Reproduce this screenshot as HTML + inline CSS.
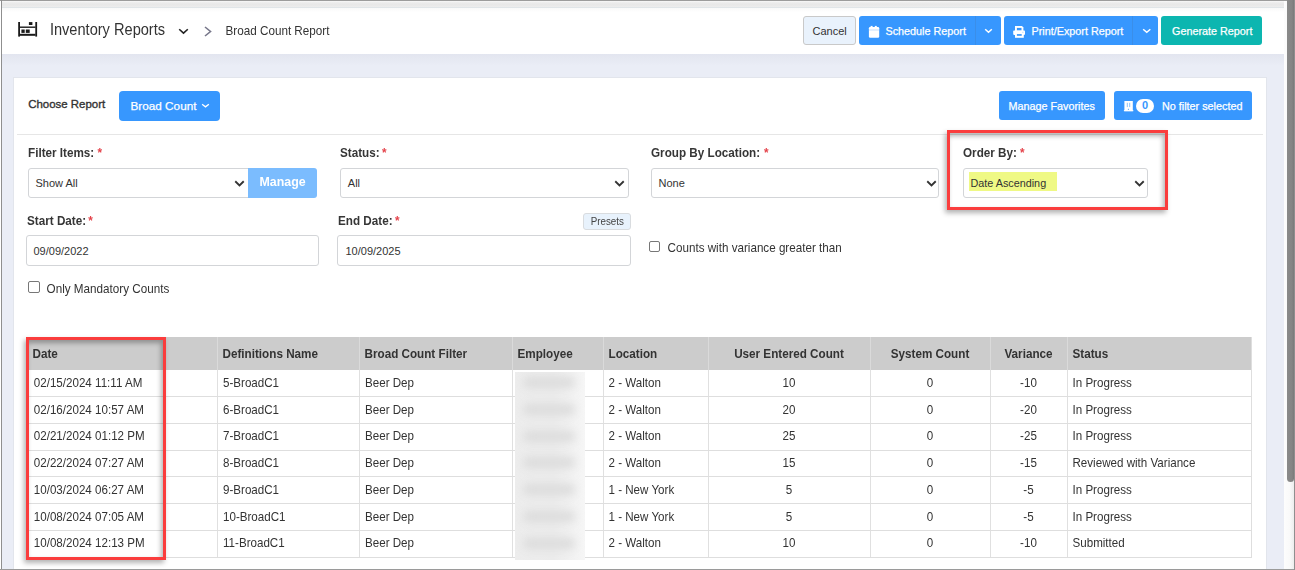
<!DOCTYPE html>
<html><head><meta charset="utf-8">
<style>
*{box-sizing:border-box;margin:0;padding:0}
html,body{width:1295px;height:570px;overflow:hidden;background:#fff;font-family:"Liberation Sans",sans-serif;color:#333}
.a{position:absolute}
.t{position:absolute;white-space:nowrap;line-height:1}
</style></head>
<body>

<div class="a" style="left:0px;top:0px;width:1295px;height:1px;background:#9c9c9c;"></div>
<div class="a" style="left:1px;top:0px;width:1px;height:570px;background:#8f8f8f;"></div>
<div class="a" style="left:0px;top:569px;width:1295px;height:1px;background:#9a9a9a;"></div>
<div class="a" style="left:1294px;top:0px;width:1px;height:570px;background:#8f8f8f;"></div>
<div class="a" style="left:2px;top:1px;width:1282px;height:6px;background:linear-gradient(#f8f8f8,#ebebeb 30%,#e8e8e8 60%,#ececec);"></div>
<div class="a" style="left:2px;top:7px;width:1282px;height:1px;background:#e0e5e8;"></div>
<div class="a" style="left:2px;top:8px;width:1282px;height:46px;background:linear-gradient(#f9f9f9,#fff 4px);"></div>
<div class="a" style="left:2px;top:54px;width:1282px;height:515px;background:#eaedf6;"></div>
<div class="a" style="left:2px;top:54px;width:1282px;height:12px;background:linear-gradient(rgba(60,60,90,0.045),rgba(60,60,90,0));"></div>
<div class="a" style="left:1284px;top:1px;width:10px;height:568px;background:linear-gradient(to right,#fdfdfd,#f9f9f9 60%,#ededed);"></div>
<div class="a" style="left:1287px;top:0px;width:7px;height:482px;background:linear-gradient(to right,#8a8a8a,#858585 70%,#7a7a7a);border-radius:0 0 4px 4px"></div>
<div class="a" style="left:13px;top:77px;width:1254px;height:492px;background:#fff;border:1px solid #e2e5ec;border-bottom:none"></div>
<svg class="a" style="left:17px;top:21px" width="21" height="17" fill="#1a1a1a">
<rect x="1.2" y="1" width="1.8" height="14.6"/><rect x="18.3" y="1" width="1.8" height="14.6"/>
<rect x="2.5" y="5.5" width="16" height="1.4"/><rect x="2.5" y="12.8" width="16" height="2"/>
<rect x="11.9" y="1.1" width="3.5" height="2.9"/>
<rect x="4.4" y="8.5" width="3.3" height="3.4"/><rect x="8.8" y="8.5" width="3.9" height="3.4"/>
</svg>
<div class="t" style="left:49.90px;top:22.64px;font-size:14.6px;font-weight:normal;color:#333;transform:scaleY(1.08);transform-origin:0 12.36px;">Inventory Reports</div>
<svg class="a" style="left:177px;top:26.6px" width="13" height="9.0"><polyline points="2.8,2.8 6.5,6.2 10.2,2.8" fill="none" stroke="#222" stroke-width="1.6" stroke-linecap="square"/></svg>
<svg class="a" style="left:202px;top:25px" width="12" height="13"><polyline points="3,2 8.5,6.5 3,11" fill="none" stroke="#77778a" stroke-width="1.6"/></svg>
<div class="t" style="left:225.50px;top:25.10px;font-size:11.7px;font-weight:normal;color:#333;transform:scaleY(1.1);transform-origin:0 9.90px;">Broad Count Report</div>
<div class="a" style="left:803px;top:16px;width:53px;height:29px;background:#e9f2fc;border:1px solid #c9c9c9;border-radius:3px"></div>
<div class="t" style="left:812.50px;top:25.99px;font-size:11px;font-weight:normal;color:#333;">Cancel</div>
<div class="a" style="left:859px;top:16px;width:142px;height:29px;background:#3797fe;border-radius:3px"></div>
<div class="a" style="left:975px;top:16px;width:1px;height:29px;background:#3a8ee9;"></div>
<svg class="a" style="left:868px;top:25px" width="12" height="14">
<rect x="0.9" y="2" width="10.3" height="10.7" rx="1.2" fill="#fff"/><rect x="0.9" y="4.7" width="10.3" height="0.6" fill="#9fcbfb"/><rect x="2.6" y="0.9" width="2" height="2.6" fill="#fff"/><rect x="6.8" y="0.9" width="2" height="2.6" fill="#fff"/>
</svg>
<div class="t" style="left:885.50px;top:26.16px;font-size:10.8px;font-weight:normal;color:#fff;-webkit-text-stroke:0.25px #fff">Schedule Report</div>
<svg class="a" style="left:983px;top:27px" width="11" height="8"><polyline points="2.75,2.75 5.5,5.25 8.25,2.75" fill="none" stroke="#fff" stroke-width="1.5" stroke-linecap="square"/></svg>
<div class="a" style="left:1004px;top:16px;width:154px;height:29px;background:#3797fe;border-radius:3px"></div>
<div class="a" style="left:1132px;top:16px;width:1px;height:29px;background:#3a8ee9;"></div>
<svg class="a" style="left:1012px;top:25px" width="15" height="14">
<path d="M3,1H10L11.4,2.4V6H3Z" fill="#fff"/><rect x="4.9" y="2.9" width="4.6" height="2.7" fill="#3797fe"/>
<rect x="1.2" y="5.6" width="11.8" height="4.3" rx="0.8" fill="#fff"/>
<rect x="3" y="8" width="8.8" height="4.8" fill="#fff"/><rect x="4.9" y="9.1" width="4.8" height="1.7" fill="#3797fe"/>
<rect x="10.4" y="6.8" width="1" height="0.9" fill="#9fcbfb"/>
</svg>
<div class="t" style="left:1031.50px;top:26.16px;font-size:10.8px;font-weight:normal;color:#fff;-webkit-text-stroke:0.25px #fff">Print/Export Report</div>
<svg class="a" style="left:1140.5px;top:27px" width="11.5" height="8"><polyline points="2.75,2.75 5.75,5.25 8.75,2.75" fill="none" stroke="#fff" stroke-width="1.5" stroke-linecap="square"/></svg>
<div class="a" style="left:1161px;top:16px;width:101px;height:29px;background:#0cb6b0;border-radius:3px"></div>
<div class="t" style="left:1172.00px;top:26.16px;font-size:10.8px;font-weight:normal;color:#fff;-webkit-text-stroke:0.25px #fff">Generate Report</div>
<div class="t" style="left:28.20px;top:99.21px;font-size:11.45px;font-weight:normal;color:#333;-webkit-text-stroke:0.35px #333">Choose Report</div>
<div class="a" style="left:119px;top:91px;width:101px;height:30px;background:#3797fe;border-radius:4px"></div>
<div class="t" style="left:130.50px;top:100.05px;font-size:11.75px;font-weight:normal;color:#fff;-webkit-text-stroke:0.25px #fff">Broad Count</div>
<svg class="a" style="left:199.5px;top:102px" width="11.0" height="7.5"><polyline points="2.7,2.7 5.5,4.8 8.3,2.7" fill="none" stroke="#fff" stroke-width="1.4" stroke-linecap="square"/></svg>
<div class="a" style="left:999px;top:91px;width:106px;height:29px;background:#3797fe;border-radius:3px"></div>
<div class="t" style="left:1008.50px;top:101.16px;font-size:10.8px;font-weight:normal;color:#fff;-webkit-text-stroke:0.25px #fff">Manage Favorites</div>
<div class="a" style="left:1114px;top:91px;width:138px;height:29px;background:#3797fe;border-radius:3px"></div>
<div class="t" style="left:1162.00px;top:101.16px;font-size:10.8px;font-weight:normal;color:#fff;-webkit-text-stroke:0.25px #fff">No filter selected</div>
<div class="a" style="left:1136px;top:98.7px;width:18px;height:14.299999999999997px;background:#fff;border-radius:7px"></div>
<div class="t" style="left:1142.00px;top:99.69px;font-size:11px;font-weight:bold;color:#3797fe;">0</div>
<svg class="a" style="left:1123px;top:100px" width="11" height="13">
<rect x="1.4" y="1" width="8.4" height="10.2" fill="#fff"/><rect x="0.9" y="10.1" width="9.4" height="1.1" fill="#fff"/>
<rect x="3.8" y="2.8" width="1" height="4.3" fill="#8cc3fb"/><rect x="6.2" y="2.8" width="1" height="4.3" fill="#8cc3fb"/>
<rect x="4.9" y="8.8" width="1" height="1" fill="#3797fe"/>
</svg>
<div class="a" style="left:17px;top:134px;width:1246px;height:1px;background:#e6e6e6;"></div>
<div class="t" style="left:28.00px;top:147.10px;font-size:11.7px;font-weight:bold;color:#363636;transform:scaleY(1.09);transform-origin:0 9.90px;">Filter Items:</div>
<div class="t" style="left:97.50px;top:147.10px;font-size:11.7px;font-weight:bold;color:#e4434b;transform:scaleY(1.09);transform-origin:0 9.90px;">*</div>
<div class="a" style="left:28px;top:168px;width:221px;height:30px;background:#fff;border:1px solid #d3d5d8;border-radius:3px;border-radius:3px 0 0 3px"></div>
<div class="t" style="left:35.50px;top:178.19px;font-size:11px;font-weight:normal;color:#333;">Show All</div>
<svg class="a" style="left:233px;top:178.6px" width="13" height="9.300000000000011"><polyline points="2.95,2.95 6.5,6.350000000000011 10.05,2.95" fill="none" stroke="#333" stroke-width="1.9" stroke-linecap="square"/></svg>
<div class="a" style="left:248px;top:168px;width:69px;height:30px;background:#7bbcfe;border-radius:0 3px 3px 0"></div>
<div class="t" style="left:259.50px;top:175.50px;font-size:12.4px;font-weight:bold;color:#fff;transform:scaleY(1.08);transform-origin:0 10.50px;">Manage</div>
<div class="t" style="left:340.00px;top:147.10px;font-size:11.7px;font-weight:bold;color:#363636;transform:scaleY(1.09);transform-origin:0 9.90px;">Status:</div>
<div class="t" style="left:382.00px;top:147.10px;font-size:11.7px;font-weight:bold;color:#e4434b;transform:scaleY(1.09);transform-origin:0 9.90px;">*</div>
<div class="a" style="left:340px;top:168px;width:289px;height:30px;background:#fff;border:1px solid #d3d5d8;border-radius:3px;"></div>
<div class="t" style="left:347.80px;top:178.19px;font-size:11px;font-weight:normal;color:#333;">All</div>
<svg class="a" style="left:612.8px;top:178.6px" width="13.0" height="9.300000000000011"><polyline points="2.95,2.95 6.5,6.350000000000011 10.05,2.95" fill="none" stroke="#333" stroke-width="1.9" stroke-linecap="square"/></svg>
<div class="t" style="left:651.00px;top:147.10px;font-size:11.7px;font-weight:bold;color:#363636;transform:scaleY(1.09);transform-origin:0 9.90px;">Group By Location:</div>
<div class="t" style="left:764.00px;top:147.10px;font-size:11.7px;font-weight:bold;color:#e4434b;transform:scaleY(1.09);transform-origin:0 9.90px;">*</div>
<div class="a" style="left:651px;top:168px;width:288px;height:30px;background:#fff;border:1px solid #d3d5d8;border-radius:3px;"></div>
<div class="t" style="left:658.50px;top:178.19px;font-size:11px;font-weight:normal;color:#333;">None</div>
<svg class="a" style="left:924.5px;top:178.6px" width="13.0" height="9.300000000000011"><polyline points="2.95,2.95 6.5,6.350000000000011 10.05,2.95" fill="none" stroke="#333" stroke-width="1.9" stroke-linecap="square"/></svg>
<div class="t" style="left:963.00px;top:147.10px;font-size:11.7px;font-weight:bold;color:#363636;transform:scaleY(1.09);transform-origin:0 9.90px;">Order By:</div>
<div class="t" style="left:1020.00px;top:147.10px;font-size:11.7px;font-weight:bold;color:#e4434b;transform:scaleY(1.09);transform-origin:0 9.90px;">*</div>
<div class="a" style="left:963px;top:168px;width:185px;height:30px;background:#fff;border:1px solid #d3d5d8;border-radius:3px;"></div>
<svg class="a" style="left:1132.5px;top:178.6px" width="13.0" height="9.300000000000011"><polyline points="2.95,2.95 6.5,6.350000000000011 10.05,2.95" fill="none" stroke="#333" stroke-width="1.9" stroke-linecap="square"/></svg>
<div class="a" style="left:969px;top:172px;width:88px;height:19px;background:#eff985;"></div>
<div class="t" style="left:970.50px;top:178.36px;font-size:10.8px;font-weight:normal;color:#333;">Date Ascending</div>
<div class="t" style="left:27.00px;top:215.10px;font-size:11.7px;font-weight:bold;color:#363636;transform:scaleY(1.09);transform-origin:0 9.90px;">Start Date:</div>
<div class="t" style="left:88.30px;top:215.10px;font-size:11.7px;font-weight:bold;color:#e4434b;transform:scaleY(1.09);transform-origin:0 9.90px;">*</div>
<div class="a" style="left:26px;top:235px;width:293px;height:31px;background:#fff;border:1px solid #d3d5d8;border-radius:3px"></div>
<div class="t" style="left:33.50px;top:245.69px;font-size:11px;font-weight:normal;color:#333;">09/09/2022</div>
<div class="t" style="left:338.00px;top:215.10px;font-size:11.7px;font-weight:bold;color:#363636;transform:scaleY(1.09);transform-origin:0 9.90px;">End Date:</div>
<div class="t" style="left:395.00px;top:215.10px;font-size:11.7px;font-weight:bold;color:#e4434b;transform:scaleY(1.09);transform-origin:0 9.90px;">*</div>
<div class="a" style="left:583px;top:213px;width:48px;height:16.5px;background:#e8f2fc;border:1px solid #d9dcdf;border-radius:3px"></div>
<div class="t" style="left:590.70px;top:216.70px;font-size:9.8px;font-weight:normal;color:#444;transform:scaleY(1.1);transform-origin:0 8.30px;">Presets</div>
<div class="a" style="left:337px;top:235px;width:294px;height:31px;background:#fff;border:1px solid #d3d5d8;border-radius:3px"></div>
<div class="t" style="left:345.50px;top:245.69px;font-size:11px;font-weight:normal;color:#333;">10/09/2025</div>
<div class="a" style="left:28px;top:281px;width:12px;height:12px;background:#fff;border:1px solid #777;border-radius:2px"></div>
<div class="t" style="left:46.60px;top:282.60px;font-size:11.7px;font-weight:normal;color:#333;transform:scaleY(1.08);transform-origin:0 9.90px;">Only Mandatory Counts</div>
<div class="a" style="left:649px;top:241px;width:11px;height:11px;background:#fff;border:1px solid #777;border-radius:2px"></div>
<div class="t" style="left:667.60px;top:242.44px;font-size:11.65px;font-weight:normal;color:#333;transform:scaleY(1.08);transform-origin:0 9.86px;">Counts with variance greater than</div>
<div class="a" style="left:27px;top:337px;width:1225px;height:33px;background:#cccccc;"></div>
<div class="a" style="left:27px;top:337px;width:1px;height:220px;background:#dedede;"></div>
<div class="a" style="left:217px;top:337px;width:1px;height:33px;background:#dadada;"></div>
<div class="a" style="left:217px;top:370px;width:1px;height:187px;background:#e0e0e0;"></div>
<div class="a" style="left:359px;top:337px;width:1px;height:33px;background:#dadada;"></div>
<div class="a" style="left:359px;top:370px;width:1px;height:187px;background:#e0e0e0;"></div>
<div class="a" style="left:512px;top:337px;width:1px;height:33px;background:#dadada;"></div>
<div class="a" style="left:512px;top:370px;width:1px;height:187px;background:#e0e0e0;"></div>
<div class="a" style="left:603px;top:337px;width:1px;height:33px;background:#dadada;"></div>
<div class="a" style="left:603px;top:370px;width:1px;height:187px;background:#e0e0e0;"></div>
<div class="a" style="left:708px;top:337px;width:1px;height:33px;background:#dadada;"></div>
<div class="a" style="left:708px;top:370px;width:1px;height:187px;background:#e0e0e0;"></div>
<div class="a" style="left:870px;top:337px;width:1px;height:33px;background:#dadada;"></div>
<div class="a" style="left:870px;top:370px;width:1px;height:187px;background:#e0e0e0;"></div>
<div class="a" style="left:990px;top:337px;width:1px;height:33px;background:#dadada;"></div>
<div class="a" style="left:990px;top:370px;width:1px;height:187px;background:#e0e0e0;"></div>
<div class="a" style="left:1067px;top:337px;width:1px;height:33px;background:#dadada;"></div>
<div class="a" style="left:1067px;top:370px;width:1px;height:187px;background:#e0e0e0;"></div>
<div class="a" style="left:1251px;top:337px;width:1px;height:220px;background:#dedede;"></div>
<div class="a" style="left:27px;top:396px;width:1225px;height:1px;background:#dedede;"></div>
<div class="a" style="left:27px;top:423px;width:1225px;height:1px;background:#dedede;"></div>
<div class="a" style="left:27px;top:450px;width:1225px;height:1px;background:#dedede;"></div>
<div class="a" style="left:27px;top:476px;width:1225px;height:1px;background:#dedede;"></div>
<div class="a" style="left:27px;top:503px;width:1225px;height:1px;background:#dedede;"></div>
<div class="a" style="left:27px;top:530px;width:1225px;height:1px;background:#dedede;"></div>
<div class="a" style="left:27px;top:557px;width:1225px;height:1px;background:#dedede;"></div>
<div class="t" style="left:32.50px;top:347.60px;font-size:11.7px;font-weight:bold;color:#333;transform:scaleY(1.06);transform-origin:0 9.90px;">Date</div>
<div class="t" style="left:222.50px;top:347.60px;font-size:11.7px;font-weight:bold;color:#333;transform:scaleY(1.06);transform-origin:0 9.90px;">Definitions Name</div>
<div class="t" style="left:364.50px;top:347.60px;font-size:11.7px;font-weight:bold;color:#333;transform:scaleY(1.06);transform-origin:0 9.90px;">Broad Count Filter</div>
<div class="t" style="left:517.50px;top:347.60px;font-size:11.7px;font-weight:bold;color:#333;transform:scaleY(1.06);transform-origin:0 9.90px;">Employee</div>
<div class="t" style="left:608.50px;top:347.60px;font-size:11.7px;font-weight:bold;color:#333;transform:scaleY(1.06);transform-origin:0 9.90px;">Location</div>
<div class="t" style="left:708px;width:162px;text-align:center;top:347.60px;font-size:11.7px;font-weight:bold;color:#333;transform:scaleY(1.06);transform-origin:0 9.9px">User Entered Count</div>
<div class="t" style="left:870px;width:120px;text-align:center;top:347.60px;font-size:11.7px;font-weight:bold;color:#333;transform:scaleY(1.06);transform-origin:0 9.9px">System Count</div>
<div class="t" style="left:990px;width:77px;text-align:center;top:347.60px;font-size:11.7px;font-weight:bold;color:#333;transform:scaleY(1.06);transform-origin:0 9.9px">Variance</div>
<div class="t" style="left:1072.50px;top:347.60px;font-size:11.7px;font-weight:bold;color:#333;transform:scaleY(1.06);transform-origin:0 9.90px;">Status</div>
<div class="t" style="left:33.80px;top:376.98px;font-size:11.6px;font-weight:normal;color:#333;transform:scaleY(1.1);transform-origin:0 9.82px;">02/15/2024 11:11 AM</div>
<div class="t" style="left:223.00px;top:376.98px;font-size:11.6px;font-weight:normal;color:#333;transform:scaleY(1.1);transform-origin:0 9.82px;">5-BroadC1</div>
<div class="t" style="left:365.00px;top:376.98px;font-size:11.6px;font-weight:normal;color:#333;transform:scaleY(1.1);transform-origin:0 9.82px;">Beer Dep</div>
<div class="t" style="left:608.50px;top:376.98px;font-size:11.6px;font-weight:normal;color:#333;transform:scaleY(1.1);transform-origin:0 9.82px;">2 - Walton</div>
<div class="t" style="left:708px;width:162px;text-align:center;top:376.98px;font-size:11.6px;color:#333;transform:scaleY(1.1);transform-origin:0 9.82px">10</div>
<div class="t" style="left:870px;width:120px;text-align:center;top:376.98px;font-size:11.6px;color:#333;transform:scaleY(1.1);transform-origin:0 9.82px">0</div>
<div class="t" style="left:990px;width:77px;text-align:center;top:376.98px;font-size:11.6px;color:#333;transform:scaleY(1.1);transform-origin:0 9.82px">-10</div>
<div class="t" style="left:1072.50px;top:376.98px;font-size:11.6px;font-weight:normal;color:#333;transform:scaleY(1.1);transform-origin:0 9.82px;">In Progress</div>
<div class="t" style="left:33.80px;top:403.68px;font-size:11.6px;font-weight:normal;color:#333;transform:scaleY(1.1);transform-origin:0 9.82px;">02/16/2024 10:57 AM</div>
<div class="t" style="left:223.00px;top:403.68px;font-size:11.6px;font-weight:normal;color:#333;transform:scaleY(1.1);transform-origin:0 9.82px;">6-BroadC1</div>
<div class="t" style="left:365.00px;top:403.68px;font-size:11.6px;font-weight:normal;color:#333;transform:scaleY(1.1);transform-origin:0 9.82px;">Beer Dep</div>
<div class="t" style="left:608.50px;top:403.68px;font-size:11.6px;font-weight:normal;color:#333;transform:scaleY(1.1);transform-origin:0 9.82px;">2 - Walton</div>
<div class="t" style="left:708px;width:162px;text-align:center;top:403.68px;font-size:11.6px;color:#333;transform:scaleY(1.1);transform-origin:0 9.82px">20</div>
<div class="t" style="left:870px;width:120px;text-align:center;top:403.68px;font-size:11.6px;color:#333;transform:scaleY(1.1);transform-origin:0 9.82px">0</div>
<div class="t" style="left:990px;width:77px;text-align:center;top:403.68px;font-size:11.6px;color:#333;transform:scaleY(1.1);transform-origin:0 9.82px">-20</div>
<div class="t" style="left:1072.50px;top:403.68px;font-size:11.6px;font-weight:normal;color:#333;transform:scaleY(1.1);transform-origin:0 9.82px;">In Progress</div>
<div class="t" style="left:33.80px;top:429.98px;font-size:11.6px;font-weight:normal;color:#333;transform:scaleY(1.1);transform-origin:0 9.82px;">02/21/2024 01:12 PM</div>
<div class="t" style="left:223.00px;top:429.98px;font-size:11.6px;font-weight:normal;color:#333;transform:scaleY(1.1);transform-origin:0 9.82px;">7-BroadC1</div>
<div class="t" style="left:365.00px;top:429.98px;font-size:11.6px;font-weight:normal;color:#333;transform:scaleY(1.1);transform-origin:0 9.82px;">Beer Dep</div>
<div class="t" style="left:608.50px;top:429.98px;font-size:11.6px;font-weight:normal;color:#333;transform:scaleY(1.1);transform-origin:0 9.82px;">2 - Walton</div>
<div class="t" style="left:708px;width:162px;text-align:center;top:429.98px;font-size:11.6px;color:#333;transform:scaleY(1.1);transform-origin:0 9.82px">25</div>
<div class="t" style="left:870px;width:120px;text-align:center;top:429.98px;font-size:11.6px;color:#333;transform:scaleY(1.1);transform-origin:0 9.82px">0</div>
<div class="t" style="left:990px;width:77px;text-align:center;top:429.98px;font-size:11.6px;color:#333;transform:scaleY(1.1);transform-origin:0 9.82px">-25</div>
<div class="t" style="left:1072.50px;top:429.98px;font-size:11.6px;font-weight:normal;color:#333;transform:scaleY(1.1);transform-origin:0 9.82px;">In Progress</div>
<div class="t" style="left:33.80px;top:456.98px;font-size:11.6px;font-weight:normal;color:#333;transform:scaleY(1.1);transform-origin:0 9.82px;">02/22/2024 07:27 AM</div>
<div class="t" style="left:223.00px;top:456.98px;font-size:11.6px;font-weight:normal;color:#333;transform:scaleY(1.1);transform-origin:0 9.82px;">8-BroadC1</div>
<div class="t" style="left:365.00px;top:456.98px;font-size:11.6px;font-weight:normal;color:#333;transform:scaleY(1.1);transform-origin:0 9.82px;">Beer Dep</div>
<div class="t" style="left:608.50px;top:456.98px;font-size:11.6px;font-weight:normal;color:#333;transform:scaleY(1.1);transform-origin:0 9.82px;">2 - Walton</div>
<div class="t" style="left:708px;width:162px;text-align:center;top:456.98px;font-size:11.6px;color:#333;transform:scaleY(1.1);transform-origin:0 9.82px">15</div>
<div class="t" style="left:870px;width:120px;text-align:center;top:456.98px;font-size:11.6px;color:#333;transform:scaleY(1.1);transform-origin:0 9.82px">0</div>
<div class="t" style="left:990px;width:77px;text-align:center;top:456.98px;font-size:11.6px;color:#333;transform:scaleY(1.1);transform-origin:0 9.82px">-15</div>
<div class="t" style="left:1072.50px;top:456.98px;font-size:11.6px;font-weight:normal;color:#333;transform:scaleY(1.1);transform-origin:0 9.82px;">Reviewed with Variance</div>
<div class="t" style="left:33.80px;top:484.18px;font-size:11.6px;font-weight:normal;color:#333;transform:scaleY(1.1);transform-origin:0 9.82px;">10/03/2024 06:27 AM</div>
<div class="t" style="left:223.00px;top:484.18px;font-size:11.6px;font-weight:normal;color:#333;transform:scaleY(1.1);transform-origin:0 9.82px;">9-BroadC1</div>
<div class="t" style="left:365.00px;top:484.18px;font-size:11.6px;font-weight:normal;color:#333;transform:scaleY(1.1);transform-origin:0 9.82px;">Beer Dep</div>
<div class="t" style="left:608.50px;top:484.18px;font-size:11.6px;font-weight:normal;color:#333;transform:scaleY(1.1);transform-origin:0 9.82px;">1 - New York</div>
<div class="t" style="left:708px;width:162px;text-align:center;top:484.18px;font-size:11.6px;color:#333;transform:scaleY(1.1);transform-origin:0 9.82px">5</div>
<div class="t" style="left:870px;width:120px;text-align:center;top:484.18px;font-size:11.6px;color:#333;transform:scaleY(1.1);transform-origin:0 9.82px">0</div>
<div class="t" style="left:990px;width:77px;text-align:center;top:484.18px;font-size:11.6px;color:#333;transform:scaleY(1.1);transform-origin:0 9.82px">-5</div>
<div class="t" style="left:1072.50px;top:484.18px;font-size:11.6px;font-weight:normal;color:#333;transform:scaleY(1.1);transform-origin:0 9.82px;">In Progress</div>
<div class="t" style="left:33.80px;top:511.18px;font-size:11.6px;font-weight:normal;color:#333;transform:scaleY(1.1);transform-origin:0 9.82px;">10/08/2024 07:05 AM</div>
<div class="t" style="left:223.00px;top:511.18px;font-size:11.6px;font-weight:normal;color:#333;transform:scaleY(1.1);transform-origin:0 9.82px;">10-BroadC1</div>
<div class="t" style="left:365.00px;top:511.18px;font-size:11.6px;font-weight:normal;color:#333;transform:scaleY(1.1);transform-origin:0 9.82px;">Beer Dep</div>
<div class="t" style="left:608.50px;top:511.18px;font-size:11.6px;font-weight:normal;color:#333;transform:scaleY(1.1);transform-origin:0 9.82px;">1 - New York</div>
<div class="t" style="left:708px;width:162px;text-align:center;top:511.18px;font-size:11.6px;color:#333;transform:scaleY(1.1);transform-origin:0 9.82px">5</div>
<div class="t" style="left:870px;width:120px;text-align:center;top:511.18px;font-size:11.6px;color:#333;transform:scaleY(1.1);transform-origin:0 9.82px">0</div>
<div class="t" style="left:990px;width:77px;text-align:center;top:511.18px;font-size:11.6px;color:#333;transform:scaleY(1.1);transform-origin:0 9.82px">-5</div>
<div class="t" style="left:1072.50px;top:511.18px;font-size:11.6px;font-weight:normal;color:#333;transform:scaleY(1.1);transform-origin:0 9.82px;">In Progress</div>
<div class="t" style="left:33.80px;top:537.48px;font-size:11.6px;font-weight:normal;color:#333;transform:scaleY(1.1);transform-origin:0 9.82px;">10/08/2024 12:13 PM</div>
<div class="t" style="left:223.00px;top:537.48px;font-size:11.6px;font-weight:normal;color:#333;transform:scaleY(1.1);transform-origin:0 9.82px;">11-BroadC1</div>
<div class="t" style="left:365.00px;top:537.48px;font-size:11.6px;font-weight:normal;color:#333;transform:scaleY(1.1);transform-origin:0 9.82px;">Beer Dep</div>
<div class="t" style="left:608.50px;top:537.48px;font-size:11.6px;font-weight:normal;color:#333;transform:scaleY(1.1);transform-origin:0 9.82px;">2 - Walton</div>
<div class="t" style="left:708px;width:162px;text-align:center;top:537.48px;font-size:11.6px;color:#333;transform:scaleY(1.1);transform-origin:0 9.82px">10</div>
<div class="t" style="left:870px;width:120px;text-align:center;top:537.48px;font-size:11.6px;color:#333;transform:scaleY(1.1);transform-origin:0 9.82px">0</div>
<div class="t" style="left:990px;width:77px;text-align:center;top:537.48px;font-size:11.6px;color:#333;transform:scaleY(1.1);transform-origin:0 9.82px">-10</div>
<div class="t" style="left:1072.50px;top:537.48px;font-size:11.6px;font-weight:normal;color:#333;transform:scaleY(1.1);transform-origin:0 9.82px;">Submitted</div>
<div class="a" style="left:515px;top:371.5px;width:70px;height:188px;overflow:hidden;background:linear-gradient(to right,#ededed 0%,#ebebeb 55%,#f6f6f6 100%)">
<div class="a" style="left:8px;top:5.5px;width:52px;height:11px;background:#dcdcdc;border-radius:6px;filter:blur(4px)"></div>
<div class="a" style="left:8px;top:32.0px;width:52px;height:11px;background:#dcdcdc;border-radius:6px;filter:blur(4px)"></div>
<div class="a" style="left:8px;top:59.0px;width:52px;height:11px;background:#dcdcdc;border-radius:6px;filter:blur(4px)"></div>
<div class="a" style="left:8px;top:85.8px;width:52px;height:11px;background:#dcdcdc;border-radius:6px;filter:blur(4px)"></div>
<div class="a" style="left:8px;top:112.5px;width:52px;height:11px;background:#dcdcdc;border-radius:6px;filter:blur(4px)"></div>
<div class="a" style="left:8px;top:139.5px;width:52px;height:11px;background:#dcdcdc;border-radius:6px;filter:blur(4px)"></div>
<div class="a" style="left:8px;top:166.2px;width:52px;height:11px;background:#dcdcdc;border-radius:6px;filter:blur(4px)"></div>
</div>
<div class="a" style="left:947px;top:130px;width:221px;height:80px;border:3px solid #fa3d3d;box-shadow:-2px 3px 5px rgba(0,0,0,0.3), inset -2px 3px 5px rgba(0,0,0,0.3)"></div>
<div class="a" style="left:26px;top:337px;width:140px;height:223px;border:3px solid #fa3d3d;box-shadow:-2px 3px 5px rgba(0,0,0,0.3), inset -2px 3px 5px rgba(0,0,0,0.3)"></div>
</body></html>
